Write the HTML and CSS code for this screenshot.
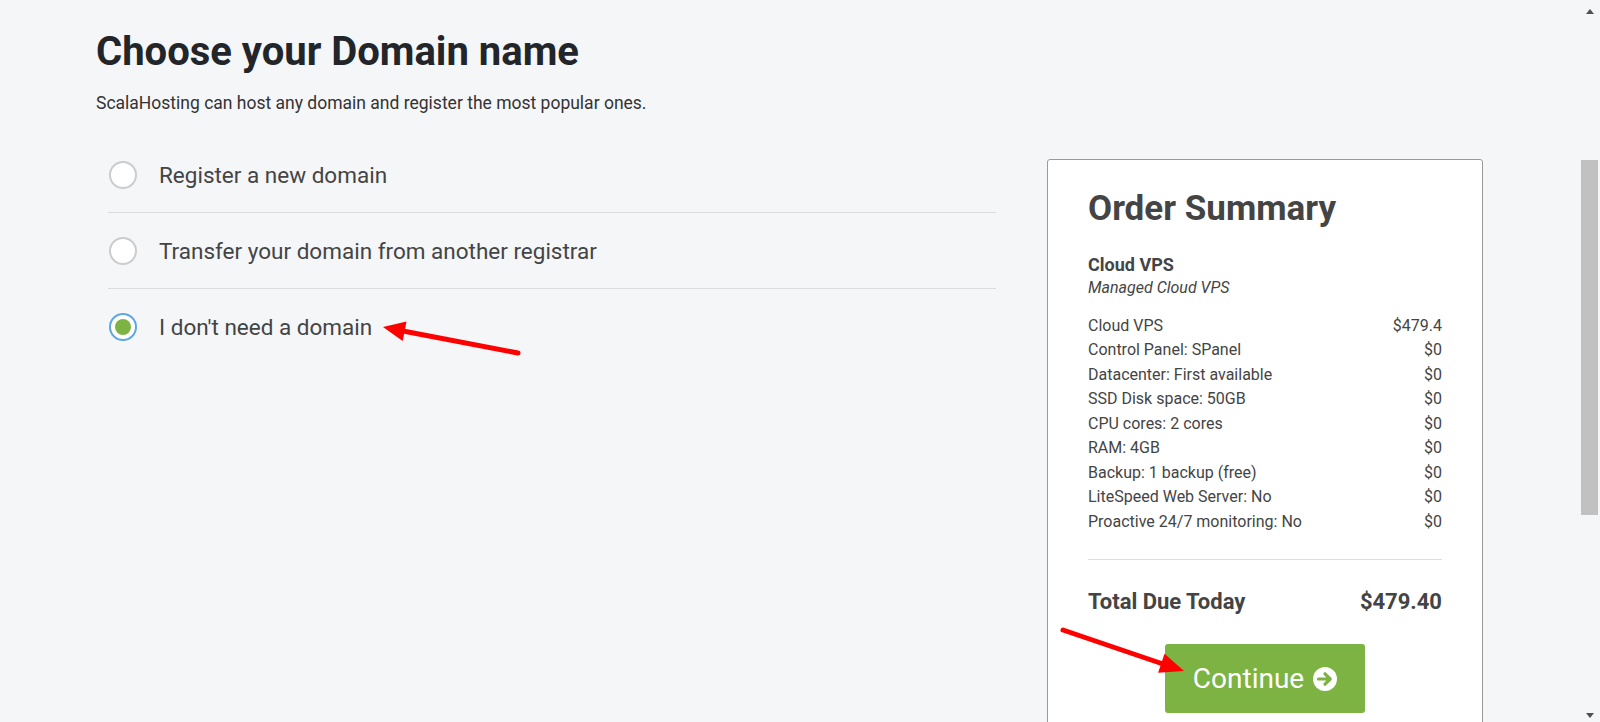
FILE: index.html
```html
<!DOCTYPE html>
<html lang="en">
<head>
<meta charset="utf-8">
<title>Choose your Domain name</title>
<link rel="stylesheet" href="styles.css">
</head>
<body>
<div class="page">
  <main class="main">
    <h1 class="title">Choose your Domain name</h1>
    <p class="subtitle">ScalaHosting can host any domain and register the most popular ones.</p>
    <div class="layout">
      <section class="options">
        <label class="option">
          <span class="radio"></span>
          <span class="option-text">Register a new domain</span>
        </label>
        <label class="option">
          <span class="radio"></span>
          <span class="option-text">Transfer your domain from another registrar</span>
        </label>
        <label class="option option-last">
          <span class="radio radio-checked"><span class="radio-dot"></span></span>
          <span class="option-text">I don't need a domain</span>
        </label>
      </section>
      <aside class="summary">
        <h2 class="summary-title">Order Summary</h2>
        <div class="product-name">Cloud VPS</div>
        <div class="product-group">Managed Cloud VPS</div>
        <ul class="items">
          <li class="item"><span>Cloud VPS</span><span>$479.4</span></li>
          <li class="item"><span>Control Panel: SPanel</span><span>$0</span></li>
          <li class="item"><span>Datacenter: First available</span><span>$0</span></li>
          <li class="item"><span>SSD Disk space: 50GB</span><span>$0</span></li>
          <li class="item"><span>CPU cores: 2 cores</span><span>$0</span></li>
          <li class="item"><span>RAM: 4GB</span><span>$0</span></li>
          <li class="item"><span>Backup: 1 backup (free)</span><span>$0</span></li>
          <li class="item"><span>LiteSpeed Web Server: No</span><span>$0</span></li>
          <li class="item"><span>Proactive 24/7 monitoring: No</span><span>$0</span></li>
        </ul>
        <div class="total">
          <span>Total Due Today</span>
          <span>$479.40</span>
        </div>
        <div class="actions">
          <button class="btn-continue" type="button">
            <span>Continue</span>
            <svg class="btn-icon" width="24" height="24" viewBox="0 0 24 24" aria-hidden="true">
              <circle cx="12" cy="12" r="12" fill="#ffffff"/>
              <path d="M5.5 12 H17 M12 6.8 L17.2 12 L12 17.2" fill="none" stroke="#7cb342" stroke-width="3.2" stroke-linecap="round" stroke-linejoin="round"/>
            </svg>
          </button>
        </div>
      </aside>
    </div>
  </main>
  <div class="scrollbar" aria-hidden="true">
    <div class="sb-button"><span class="sb-up"></span></div>
    <div class="sb-track"><div class="sb-thumb"></div></div>
    <div class="sb-button"><span class="sb-down"></span></div>
  </div>
  <svg class="annotations" width="1600" height="722" viewBox="0 0 1600 722" aria-hidden="true">
    <line x1="518" y1="353" x2="403" y2="331" stroke="#ff0000" stroke-width="5" stroke-linecap="round"/>
    <polygon points="383,327 406.5,321.4 402.7,341" fill="#ff0000"/>
    <line x1="1063" y1="630" x2="1163" y2="664" stroke="#ff0000" stroke-width="5" stroke-linecap="round"/>
    <polygon points="1184,671 1164.5,653.8 1158.1,672.8" fill="#ff0000"/>
  </svg>
</div>
</body>
</html>
```

FILE: styles.css
```css
* {
  box-sizing: border-box;
}

html, body {
  margin: 0;
  padding: 0;
  height: 100%;
}

body {
  background: #f5f6f8;
  font-family: Roboto, "Liberation Sans", Arial, sans-serif;
  color: #444444;
  overflow: hidden;
}

.page {
  position: relative;
  display: flex;
  height: 722px;
  overflow: hidden;
}

.main {
  flex: 1;
  padding: 27px 0 0 96px;
  min-width: 0;
}

.title {
  margin: 0;
  font-size: 40px;
  line-height: 50px;
  font-weight: 700;
  color: #222529;
}

.subtitle {
  margin: 14px 0 0;
  font-size: 17.5px;
  line-height: 24px;
  color: #333333;
}

.layout {
  display: flex;
  align-items: flex-start;
  margin-top: 22px;
}

.options {
  width: 888px;
  margin-left: 12px;
}

.option {
  display: flex;
  align-items: center;
  height: 76px;
  border-bottom: 1px solid #dcdcdc;
  cursor: pointer;
}

.option-last {
  border-bottom: none;
}

.radio {
  flex: none;
  display: flex;
  align-items: center;
  justify-content: center;
  width: 28px;
  height: 28px;
  margin-left: 1px;
  margin-right: 22px;
  border: 2px solid #cccccc;
  border-radius: 50%;
  background: #ffffff;
}

.radio-checked {
  border-color: #5ea7e3;
}

.radio-dot {
  width: 16px;
  height: 16px;
  border-radius: 50%;
  background: #7cb342;
}

.option-text {
  font-size: 22.5px;
  line-height: 28px;
  color: #444444;
}

.summary {
  flex: none;
  width: 436px;
  margin-left: 51px;
  margin-top: 22px;
  padding: 29px 40px 60px 40px;
  background: #ffffff;
  border: 1px solid #9a9a9a;
  border-radius: 3px;
}

.summary-title {
  margin: 0;
  font-size: 35px;
  line-height: 40px;
  font-weight: 700;
  color: #444444;
}

.product-name {
  margin-top: 24px;
  font-size: 18px;
  line-height: 24px;
  font-weight: 700;
  color: #444444;
}

.product-group {
  font-size: 16px;
  line-height: 22px;
  font-style: italic;
  color: #444444;
}

.items {
  list-style: none;
  margin: 15px 0 0;
  padding: 0 0 25px;
  border-bottom: 1px solid #dddddd;
}

.item {
  display: flex;
  justify-content: space-between;
  font-size: 16px;
  line-height: 24.46px;
  color: #444444;
}

.total {
  display: flex;
  justify-content: space-between;
  margin-top: 28px;
  font-size: 22px;
  line-height: 28px;
  font-weight: 700;
  color: #444444;
}

.actions {
  display: flex;
  justify-content: center;
  margin-top: 28px;
}

.btn-continue {
  display: flex;
  align-items: center;
  gap: 9px;
  height: 69px;
  padding: 0 28px;
  border: none;
  border-radius: 3px;
  background: #7cb342;
  color: #ffffff;
  font-family: Roboto, "Liberation Sans", Arial, sans-serif;
  font-size: 28px;
  line-height: 32px;
  cursor: pointer;
}

.btn-icon {
  display: block;
  flex: none;
}

.scrollbar {
  flex: none;
  width: 19px;
  display: flex;
  flex-direction: column;
  padding-right: 2px;
}

.sb-button {
  flex: none;
  height: 17px;
  display: flex;
  align-items: center;
  justify-content: center;
}

.sb-up {
  width: 0;
  height: 0;
  border-left: 4.5px solid transparent;
  border-right: 4.5px solid transparent;
  border-bottom: 5px solid #505050;
  margin-top: 6px;
}

.sb-down {
  width: 0;
  height: 0;
  border-left: 4.5px solid transparent;
  border-right: 4.5px solid transparent;
  border-top: 5px solid #505050;
  margin-top: 4px;
}

.sb-track {
  flex: 1;
}

.sb-thumb {
  margin-top: 143px;
  height: 355px;
  background: #c1c1c1;
}

.annotations {
  position: absolute;
  left: 0;
  top: 0;
  pointer-events: none;
}
```
